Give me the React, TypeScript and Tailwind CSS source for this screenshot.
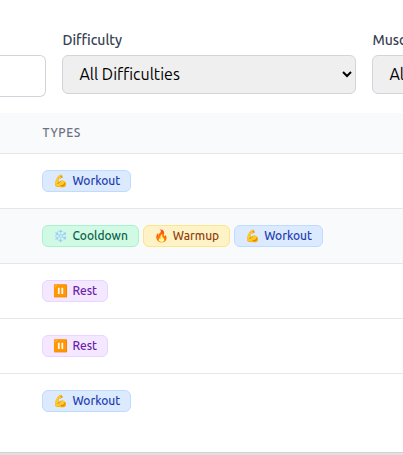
import React from 'react';

type Kind = 'workout' | 'cooldown' | 'warmup' | 'rest';

const kinds = {
  workout: { label: 'Workout', icon: '💪', box: 'border-[#bfdbfe] bg-[#dbeafe] text-[#1e40af]' },
  cooldown: { label: 'Cooldown', icon: '❄️', box: 'border-[#a7f3d0] bg-[#d1fae5] text-[#065f46]' },
  warmup: { label: 'Warmup', icon: '🔥', box: 'border-[#fde68a] bg-[#fef3c7] text-[#92400e]' },
  rest: { label: 'Rest', icon: '⏸️', box: 'border-[#e9d5ff] bg-[#f3e8ff] text-[#6b21a8]' },
};

function Badge({ kind }: { kind: Kind }) {
  const { label, icon, box } = kinds[kind];
  return (
    <span className={`inline-flex h-[22px] shrink-0 items-center rounded-md border px-2.5 text-xs font-medium whitespace-nowrap ${box}`}>
      <span className="mr-1">{icon}</span>
      {label}
    </span>
  );
}

const rows: Kind[][] = [['workout'], ['cooldown', 'warmup', 'workout'], ['rest'], ['rest'], ['workout']];

function Filter({ label, value }: { label: string; value: string }) {
  return (
    <div className="w-[294px] shrink-0">
      <div className="mb-[5px] h-5 text-sm leading-5 font-medium text-[#374151]">{label}</div>
      <select className="block h-[39px] w-full rounded-md border border-[#d1d5db] bg-[#efefef] px-3 pt-[7px] pb-[9px] text-base leading-6 text-black">
        <option>{value}</option>
      </select>
    </div>
  );
}

export default function App() {
  return (
    <div className="h-[455px] w-[403px] overflow-hidden bg-white font-['Ubuntu','Noto_Sans',sans-serif]">
      <div className="flex h-[113px] gap-4 pt-[30px]">
        <div className="mt-[25px] h-[42px] w-[46.4px] shrink-0 rounded-r-md border border-l-0 border-[#d1d5db]" />
        <Filter label="Difficulty" value="All Difficulties" />
        <Filter label="Muscle Group" value="All Muscle Groups" />
      </div>
      <div className="flex h-[41px] items-center border-b border-[#e5e7eb] bg-[#f9fafb] pl-[42.5px] text-xs font-medium tracking-[0.6px] text-[#6b7280]">TYPES</div>
      {rows.map((row, i) => (
        <div key={i} className={`flex h-[55px] items-center gap-1 border-b pl-[42.4px] ${i < 4 ? 'border-[#e5e7eb]' : 'border-transparent'} ${i === 1 ? 'bg-[#f9fafb]' : ''}`}>
          {row.map((kind, j) => <Badge key={j} kind={kind} />)}
        </div>
      ))}
      <div className="mt-[23px] h-[3px] border-t border-[#d1d3d5] bg-[#dfe0e2]" />
    </div>
  );
}
